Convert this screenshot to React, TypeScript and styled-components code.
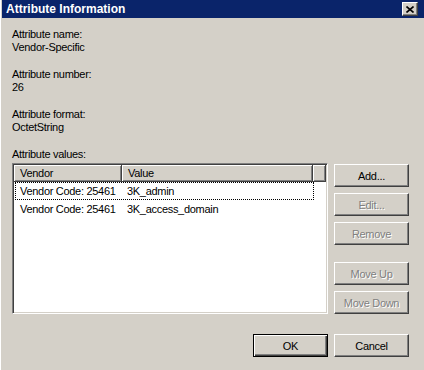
import styled, { createGlobalStyle } from "styled-components";

const fields = [
  { label: "Attribute name:", value: "Vendor-Specific" },
  { label: "Attribute number:", value: "26" },
  { label: "Attribute format:", value: "OctetString" },
];

const rows = [
  { vendor: "Vendor Code: 25461", value: "3K_admin" },
  { vendor: "Vendor Code: 25461", value: "3K_access_domain" },
];

export default function App() {
  return (
    <>
      <GlobalStyle />
      <Window>
        <TitleBar>
          <Title>Attribute Information</Title>
          <CloseButton aria-label="Close">
            <svg width="8" height="7" viewBox="0 0 8 7">
              <path d="M0.5 0.5 L7.5 6.5 M7.5 0.5 L0.5 6.5" stroke="#000" strokeWidth="1.6" />
            </svg>
          </CloseButton>
        </TitleBar>
        <Body>
          {fields.map((f) => (
            <Field key={f.label}>
              <Line>{f.label}</Line>
              <Line>{f.value}</Line>
            </Field>
          ))}
          <Line>Attribute values:</Line>
          <ListRow>
            <ListBox>
              <Header>
                <HeaderCell $w={108}>Vendor</HeaderCell>
                <HeaderCell $w={191}>Value</HeaderCell>
                <HeaderCell />
              </Header>
              {rows.map((r, i) => (
                <Row key={r.value} $focused={i === 0}>
                  <Cell $w={107}>{r.vendor}</Cell>
                  <Cell>{r.value}</Cell>
                </Row>
              ))}
            </ListBox>
            <ButtonColumn>
              <Button>Add...</Button>
              <Button $gap={6} disabled>Edit...</Button>
              <Button $gap={6} disabled>Remove</Button>
              <Button $gap={17} disabled>Move Up</Button>
              <Button $gap={6} disabled>Move Down</Button>
            </ButtonColumn>
          </ListRow>
          <Footer>
            <Button $default>OK</Button>
            <Button>Cancel</Button>
          </Footer>
        </Body>
      </Window>
    </>
  );
}

const GlobalStyle = createGlobalStyle`
  html, body {
    margin: 0;
    padding: 0;
    background: #d4d0c8;
  }
  body {
    font-family: "Liberation Sans", Arial, sans-serif;
    font-size: 11px;
    letter-spacing: -0.3px;
    color: #000;
  }
`;

const Window = styled.div`
  width: 424px;
  height: 370px;
  box-sizing: border-box;
  background: #d4d0c8;
  border-left: 1px solid #fff;
  padding-left: 1px;
  display: flex;
  flex-direction: column;
`;

const TitleBar = styled.div`
  height: 18px;
  background: #0a246a;
  display: flex;
  align-items: center;
  justify-content: space-between;
  padding: 0 6px 0 4px;
`;

const Title = styled.div`
  color: #fff;
  font-weight: bold;
  font-size: 12px;
  letter-spacing: 0;
  line-height: 18px;
`;

const CloseButton = styled.div`
  width: 16px;
  height: 14px;
  box-sizing: border-box;
  background: #d4d0c8;
  border: 1px solid;
  border-color: #fff #404040 #404040 #fff;
  box-shadow: inset -1px -1px #808080;
  display: flex;
  align-items: center;
  justify-content: center;
`;

const Body = styled.div`
  padding: 10px 15px 0 10px;
  display: flex;
  flex-direction: column;
`;

const Field = styled.div`
  margin-bottom: 14px;
`;

const Line = styled.div`
  line-height: 13px;
  white-space: nowrap;
`;

const ListRow = styled.div`
  display: flex;
  gap: 6px;
  height: 151px;
  margin-top: 2px;
`;

const ListBox = styled.div`
  width: 316px;
  box-sizing: border-box;
  background: #fff;
  border: 1px solid;
  border-color: #808080 #fff #fff #808080;
  box-shadow: inset 1px 1px #404040, inset -1px -1px #d4d0c8;
  padding: 1px;
  display: flex;
  flex-direction: column;
`;

const Header = styled.div`
  display: flex;
  height: 17px;
  flex-shrink: 0;
`;

const HeaderCell = styled.div<{ $w?: number }>`
  ${(p) => (p.$w ? `width: ${p.$w}px;` : "flex: 1;")}
  box-sizing: border-box;
  background: #d4d0c8;
  border-right: 1px solid #404040;
  border-bottom: 1px solid #404040;
  box-shadow: inset 1px 1px #fff, inset -1px -1px #808080;
  padding-left: 6px;
  line-height: 16px;
`;

const Row = styled.div<{ $focused?: boolean }>`
  display: flex;
  width: 299px;
  height: 18px;
  box-sizing: border-box;
  margin-left: 1px;
  border: 1px dotted ${(p) => (p.$focused ? "#000" : "transparent")};
  line-height: 16px;
`;

const Cell = styled.div<{ $w?: number }>`
  ${(p) => (p.$w ? `width: ${p.$w}px;` : "flex: 1;")}
  padding-left: 4px;
  box-sizing: border-box;
  white-space: nowrap;
`;

const ButtonColumn = styled.div`
  display: flex;
  flex-direction: column;
  padding-top: 1px;
`;

const Button = styled.button<{ $gap?: number; $default?: boolean }>`
  width: 75px;
  height: 23px;
  margin: ${(p) => p.$gap ?? 0}px 0 0 0;
  padding: 0;
  box-sizing: border-box;
  font-family: inherit;
  font-size: 11px;
  letter-spacing: -0.3px;
  color: #000;
  background: #d4d0c8;
  border: 1px solid;
  border-color: ${(p) => (p.$default ? "#000" : "#fff #404040 #404040 #fff")};
  box-shadow: ${(p) =>
    p.$default
      ? "inset 1px 1px #fff, inset -1px -1px #404040, inset -2px -2px #808080"
      : "inset -1px -1px #808080"};
  &:disabled {
    color: #808080;
    text-shadow: 1px 1px #fff;
  }
`;

const Footer = styled.div`
  display: flex;
  justify-content: flex-end;
  gap: 6px;
  margin-top: 20px;
`;
